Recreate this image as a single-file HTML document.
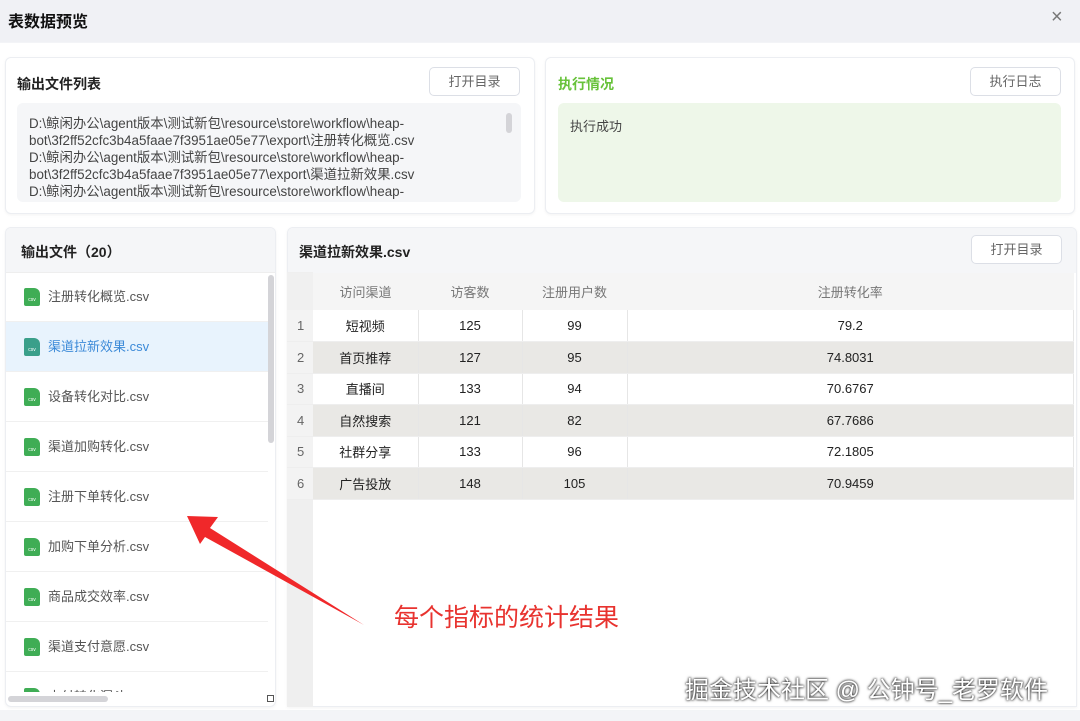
<!DOCTYPE html>
<html><head><meta charset="utf-8"><style>
*{margin:0;padding:0;box-sizing:border-box}
body{width:1080px;height:721px;overflow:hidden;background:#f3f4f7;font-family:"Liberation Sans","Noto Sans CJK SC",sans-serif;position:relative;color:#333}
.a{position:absolute}
.hdr{left:0;top:0;width:1080px;height:42px;background:#f0f1f5}
.main{left:0;top:43px;width:1080px;height:667px;background:#fff}
.card{background:#fff;border:1px solid #eceef2;border-radius:6px;box-shadow:0 1px 3px rgba(0,0,0,.05)}
.btn{border:1px solid #dcdfe6;border-radius:5px;background:#fff;font-size:13px;color:#666;text-align:center;line-height:27px;height:29px;width:91px}
.t{font-size:14px;font-weight:bold;color:#222}
.path{font-size:13.4px;line-height:17px;color:#444}
.item{left:6px;width:262px;height:50px;border-bottom:1px solid #f0f0f0;font-size:13px;color:#555;line-height:50px;padding-left:42px}
.ic{position:absolute;left:18px;top:16px;width:16px;height:18px;background:#3fad55;border-radius:2px 6px 2px 2px;font-size:5px;color:#fff;line-height:24px;text-align:center}
table{border-collapse:collapse;font-size:13px;color:#222}
td{height:31.5px;text-align:center;border-right:1px solid #e6e6e6;border-bottom:1px solid #eee}
tr.s td{background:#e9e8e5}
td.n{background:#f3f3f3 !important;color:#666;text-align:left;padding-left:10px;border-right:none}
th{height:37px;font-weight:normal;color:#777;background:#f5f5f5;font-size:13px}
</style></head><body>
<div class="a hdr"></div>
<div class="a" style="left:8px;top:8px;font-size:16px;font-weight:bold;color:#111">表数据预览</div>
<div class="a" style="left:1051px;top:6px;font-size:20px;color:#777">×</div>
<div class="a main"></div>

<div class="a card" style="left:5px;top:57px;width:530px;height:157px"></div>
<div class="a t" style="left:17px;top:74px">输出文件列表</div>
<div class="a btn" style="left:429px;top:67px">打开目录</div>
<div class="a" style="left:17px;top:103px;width:504px;height:99px;background:#f5f6f8;border-radius:6px;overflow:hidden">
<div class="path" style="padding:12px 0 0 12px">D:\鲸闲办公\agent版本\测试新包\resource\store\workflow\heap-<br>bot\3f2ff52cfc3b4a5faae7f3951ae05e77\export\注册转化概览.csv<br>D:\鲸闲办公\agent版本\测试新包\resource\store\workflow\heap-<br>bot\3f2ff52cfc3b4a5faae7f3951ae05e77\export\渠道拉新效果.csv<br>D:\鲸闲办公\agent版本\测试新包\resource\store\workflow\heap-</div>
<div class="a" style="left:489px;top:10px;width:6px;height:20px;background:#d4d4d8;border-radius:3px"></div>
</div>

<div class="a card" style="left:545px;top:57px;width:530px;height:157px"></div>
<div class="a t" style="left:558px;top:74px;color:#67c23a">执行情况</div>
<div class="a btn" style="left:970px;top:67px">执行日志</div>
<div class="a" style="left:558px;top:103px;width:503px;height:99px;background:#eef7e9;border-radius:6px;font-size:13px;padding:13px 12px;color:#444">执行成功</div>

<div class="a card" style="left:5px;top:227px;width:271px;height:480px;overflow:hidden">
<div style="height:45px;background:#f5f6f8;border-bottom:1px solid #eee"></div></div>
<div class="a t" style="left:21px;top:242px">输出文件（20）</div>
<div class="a" style="left:6px;top:272px;width:262px;height:420px;overflow:hidden">
<div class="a item" style="left:0;top:0"><span class="ic">csv</span>注册转化概览.csv</div>
<div class="a item" style="left:0;top:50px;background:#e8f3fd;color:#3c8ad8"><span class="ic" style="background:#3a9f8a">csv</span>渠道拉新效果.csv</div>
<div class="a item" style="left:0;top:100px"><span class="ic">csv</span>设备转化对比.csv</div>
<div class="a item" style="left:0;top:150px"><span class="ic">csv</span>渠道加购转化.csv</div>
<div class="a item" style="left:0;top:200px"><span class="ic">csv</span>注册下单转化.csv</div>
<div class="a item" style="left:0;top:250px"><span class="ic">csv</span>加购下单分析.csv</div>
<div class="a item" style="left:0;top:300px"><span class="ic">csv</span>商品成交效率.csv</div>
<div class="a item" style="left:0;top:350px"><span class="ic">csv</span>渠道支付意愿.csv</div>
<div class="a item" style="left:0;top:400px"><span class="ic">csv</span>支付转化漏斗.csv</div>
</div>
<div class="a" style="left:268px;top:275px;width:6px;height:168px;background:#d4d4d8;border-radius:3px"></div>
<div class="a" style="left:8px;top:696px;width:100px;height:6px;background:#d4d4d8;border-radius:3px"></div>
<div class="a" style="left:267px;top:695px;width:7px;height:7px;border:1px solid #555"></div>

<div class="a card" style="left:287px;top:227px;width:790px;height:480px;overflow:hidden;border-radius:6px 6px 0 0">
<div style="height:45px;background:#f5f6f8"></div></div>
<div class="a t" style="left:299px;top:242px">渠道拉新效果.csv</div>
<div class="a btn" style="left:971px;top:235px">打开目录</div>
<div class="a" style="left:287px;top:272px;width:26px;height:435px;background:#efefef"></div>
<table class="a" style="left:287px;top:273px;width:787px">
<tr><th style="width:26px;background:#f0f0f0"></th><th style="width:105px">访问渠道</th><th style="width:104px">访客数</th><th style="width:105px">注册用户数</th><th>注册转化率</th></tr>
<tr><td class="n">1</td><td>短视频</td><td>125</td><td>99</td><td>79.2</td></tr>
<tr class="s"><td class="n">2</td><td>首页推荐</td><td>127</td><td>95</td><td>74.8031</td></tr>
<tr><td class="n">3</td><td>直播间</td><td>133</td><td>94</td><td>70.6767</td></tr>
<tr class="s"><td class="n">4</td><td>自然搜索</td><td>121</td><td>82</td><td>67.7686</td></tr>
<tr><td class="n">5</td><td>社群分享</td><td>133</td><td>96</td><td>72.1805</td></tr>
<tr class="s"><td class="n">6</td><td>广告投放</td><td>148</td><td>105</td><td>70.9459</td></tr>
</table>

<svg class="a" style="left:0;top:0" width="1080" height="721">
<polygon points="187,516 218,517 210,528 364,625 205,537 200,544" fill="#f0282a"/>
</svg>
<div class="a" style="left:394px;top:598px;font-size:25px;color:#e8332f">每个指标的统计结果</div>
<div class="a" style="left:685px;top:670px;font-size:24px;color:#fff;text-shadow:0 0 2px #000,0 0 3px rgba(0,0,0,.6)">掘金技术社区 @ 公钟号_老罗软件</div>
</body></html>
